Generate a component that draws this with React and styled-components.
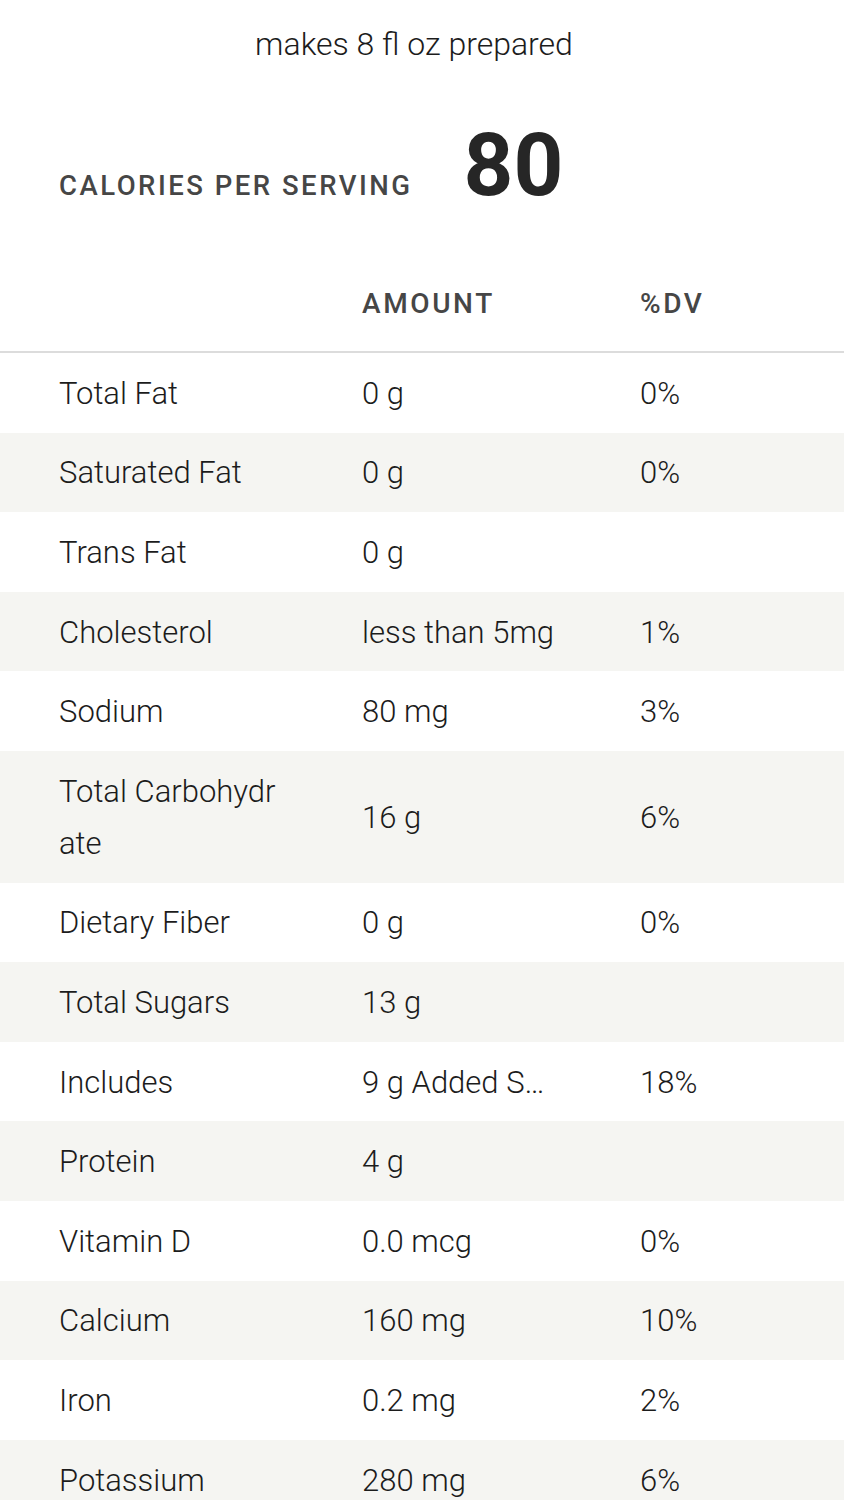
import React from 'react';
import styled, { createGlobalStyle } from 'styled-components';

const GlobalStyle = createGlobalStyle`
    html, body {
        margin: 0;
        padding: 0;
        background: #ffffff;
    }

    body {
        font-family: 'Roboto', 'Liberation Sans', sans-serif;
        color: #1c1c1c;
    }
`;

const Page = styled.div`
    width: 844px;
    height: 1500px;
    overflow: hidden;
    background: #ffffff;
`;

const ServingNote = styled.div`
    padding: 24px 16px 0 0;
    height: 44px;
    text-align: center;
    font-size: 32px;
    font-weight: 300;
    line-height: 40px;
    color: #1c1c1c;
`;

const CaloriesRow = styled.div`
    display: flex;
    align-items: baseline;
    gap: 51px;
    padding: 55px 0 0 59px;
    height: 95px;
`;

const CaloriesLabel = styled.span`
    font-size: 27.5px;
    font-weight: 500;
    letter-spacing: 2.5px;
    color: #464646;
`;

const CaloriesValue = styled.span`
    font-size: 87px;
    font-weight: 700;
    line-height: 84px;
    color: #262626;
`;

const Grid = styled.div`
    display: grid;
    grid-template-columns: 303px 278px 1fr;
    padding-left: 59px;
    align-items: center;
    background: ${({ $shaded }) => ($shaded ? '#f5f5f2' : '#ffffff')};
`;

const HeadRow = styled(Grid)`
    height: 80px;
    margin-top: 55px;
    padding-top: 11px;
    border-bottom: 2px solid #dcdcdc;
    align-items: start;
    box-sizing: border-box;
`;

const HeadCell = styled.div`
    font-size: 28px;
    font-weight: 500;
    letter-spacing: 2.6px;
    line-height: 40px;
    color: #464646;
`;

const Cell = styled.div`
    padding: 14.8px 0 12.8px;
    font-size: 31px;
    font-weight: 300;
    line-height: 52px;
    color: #1c1c1c;
`;

const LabelCell = styled(Cell)`
    padding-right: 78px;
    word-break: break-all;
`;

const AmountCell = styled(Cell)`
    padding-right: 83px;
    white-space: nowrap;
    overflow: hidden;
    text-overflow: ellipsis;
`;

const nutrients = [
    { label: 'Total Fat', amount: '0 g', dv: '0%' },
    { label: 'Saturated Fat', amount: '0 g', dv: '0%' },
    { label: 'Trans Fat', amount: '0 g', dv: '' },
    { label: 'Cholesterol', amount: 'less than 5mg', dv: '1%' },
    { label: 'Sodium', amount: '80 mg', dv: '3%' },
    { label: 'Total Carbohydrate', amount: '16 g', dv: '6%' },
    { label: 'Dietary Fiber', amount: '0 g', dv: '0%' },
    { label: 'Total Sugars', amount: '13 g', dv: '' },
    { label: 'Includes', amount: '9 g Added Sugars', dv: '18%' },
    { label: 'Protein', amount: '4 g', dv: '' },
    { label: 'Vitamin D', amount: '0.0 mcg', dv: '0%' },
    { label: 'Calcium', amount: '160 mg', dv: '10%' },
    { label: 'Iron', amount: '0.2 mg', dv: '2%' },
    { label: 'Potassium', amount: '280 mg', dv: '6%' },
];

export default function App() {
    return (
        <Page>
            <GlobalStyle />
            <ServingNote>makes 8 fl oz prepared</ServingNote>
            <CaloriesRow>
                <CaloriesLabel>CALORIES PER SERVING</CaloriesLabel>
                <CaloriesValue>80</CaloriesValue>
            </CaloriesRow>
            <HeadRow>
                <div />
                <HeadCell>AMOUNT</HeadCell>
                <HeadCell>%DV</HeadCell>
            </HeadRow>
            {nutrients.map((n, i) => (
                <Grid key={n.label} $shaded={i % 2 === 1}>
                    <LabelCell>{n.label}</LabelCell>
                    <AmountCell>{n.amount}</AmountCell>
                    <Cell>{n.dv}</Cell>
                </Grid>
            ))}
        </Page>
    );
}
